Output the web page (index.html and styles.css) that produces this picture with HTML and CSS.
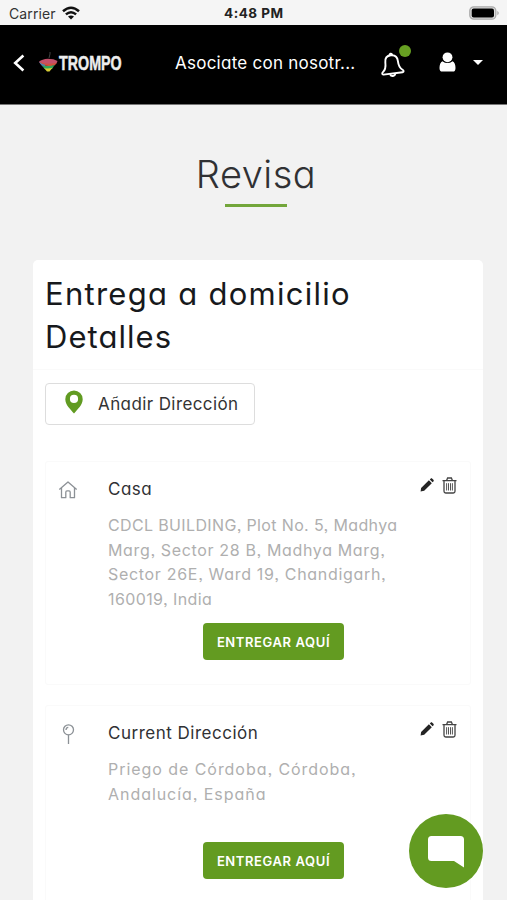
FILE: index.html
```html
<!DOCTYPE html>
<html lang="es">
<head>
<meta charset="utf-8">
<title>Revisa</title>
<link rel="stylesheet" href="styles.css">
</head>
<body>
<svg class="defs" width="0" height="0">
  <symbol id="pencil" viewBox="0 0 14 14"><path d="M.6 13.5 1.1 10 8.900 2.300l2.900 2.900-7.600 7.600zM9.800 1.500l.8-.8c.5-.5 1.200-.5 1.700 0l1.100 1.100c.5.5.5 1.200 0 1.700l-.8.8z" fill="#242424"/></symbol>
  <symbol id="trash" viewBox="0 0 15 17"><path d="M.5 3.600h14M4.600 3.400 5.600 1h3.800l1 2.400M2 4v10.300q0 1.700 1.700 1.700h7.600q1.700 0 1.700-1.700V4" fill="none" stroke="#444" stroke-width="1.300"/><path d="M4.600 6.200v7.300M6.500 6.200v7.300M8.500 6.200v7.300M10.400 6.200v7.300" fill="none" stroke="#555"/></symbol>
</svg>
<header class="status">
  <span class="carrier">Carrier</span>
  <svg class="wifi" viewBox="0 0 18 14"><g fill="none" stroke="#111" stroke-width="2.500"><path d="M1 5.300q8-7.200 16 0"/><path d="M3.900 8.400q5.100-4.400 10.200 0"/></g><path d="M6 10.600q3-2.400 6 0l-3 3z" fill="#111"/></svg>
  <span class="time">4:48 PM</span>
  <svg class="battery" viewBox="0 0 31 14"><rect x=".8" y=".8" width="26" height="12.400" rx="4" fill="#ddd" stroke="#aaa" stroke-width="1.300"/><rect x="2.700" y="2.400" width="22.300" height="9.200" rx="2" fill="#000"/><path d="M28.300 4.700q3 2.300 0 4.600z" fill="#aaa"/></svg>
</header>
<nav class="nav">
  <svg class="back" viewBox="0 0 12 18"><path d="M10.400 1.500 2.200 9l8.200 7.500" fill="none" stroke="#fff" stroke-width="2.600"/></svg>
  <svg class="logo" viewBox="0 0 19 21">
    <path d="M11 1v2l-1 4" fill="none" stroke="#444" stroke-width="1"/>
    <path d="M0 10.800Q3 8 9 7.700q6 0 9.500 2.300l-1 2.500Q9 15 1.500 13z" fill="#c4506a"/>
    <path d="M.3 10.800q7 3.400 17.400 1l-1.700 2.400Q9 16 3 14z" fill="#d0523c"/>
    <path d="M0 10.800q3 2.400 6 3L7.500 18Q3 16.500 0 10.800z" fill="#4a7fb8"/>
    <path d="M3 14.200q7 1.800 12.500-.2l-2 3.500q-4 1.600-8 .2z" fill="#32a35a"/>
    <path d="M5 17q4 1.200 8.500-.2l-3 3.600H8z" fill="#d7ce35"/>
  </svg>
  <span class="brand">TROMPO</span>
  <span class="promo">Asociate con nosotr...</span>
  <span class="alerts">
    <svg viewBox="0 0 26 26"><g transform="rotate(-7 13 13)" fill="none" stroke="#fff" stroke-width="1.900" stroke-linejoin="round"><path d="M13 3.200c-4.200 0-6.300 2.800-6.300 6.500 0 4.700-.7 7.300-3.600 9.300-1.300 1-1.100 2.500.3 2.500h19.200c1.400 0 1.600-1.500.3-2.500-2.900-2-3.600-4.600-3.600-9.300 0-3.700-2.100-6.500-6.300-6.500z"/><path d="M11.700 3.200c0-2 2.600-2 2.600 0M9.900 22c.9 2.700 4.600 2.700 5.500 0"/></g></svg>
    <i class="dot"></i>
  </span>
  <svg class="user" viewBox="0 0 17 20"><circle cx="8.500" cy="5.300" r="4.900" fill="#fff"/><path d="M3.400 9.200q5.100 3.700 10.200 0 2.900 1.700 2.900 6.700 0 3.600-2.600 3.600H3.200Q.5 19.500.5 15.900q0-5 2.900-6.700z" fill="#fff"/></svg>
  <i class="caret"></i>
</nav>
<main>
  <h1><span>Revisa</span></h1>
  <section class="panel">
    <h2><span class="h-a">Entrega a domicilio</span><br><span class="h-b">Detalles</span></h2>
    <div class="content">
      <button class="add">
        <svg viewBox="0 0 18 24"><path fill-rule="evenodd" d="M9 .5a8.700 8.700 0 0 0-8.700 8.700C.3 15 5.500 19 9 23.500 12.500 19 17.700 15 17.700 9.200A8.700 8.700 0 0 0 9 .5zm0 4.300a4.100 4.100 0 1 1 0 8.200 4.100 4.100 0 0 1 0-8.200z" fill="#619b22"/></svg>
        <span>Añadir Dirección</span>
      </button>
      <article class="address">
        <svg class="kind" viewBox="0 0 20 20"><path d="M1.300 9.500 10 2l8.700 7.500M3.500 8v9.700h4.300v-5.500q0-1.300 1.200-1.300h2q1.200 0 1.200 1.300v5.500h4.300V8" fill="none" stroke="#8c9196" stroke-width="1.300" stroke-linejoin="round"/></svg>
        <div class="body">
          <h3>Casa</h3>
          <p><span class="l1">CDCL BUILDING, Plot No. 5, Madhya</span><br><span class="l2">Marg, Sector 28 B, Madhya Marg,</span><br><span class="l3">Sector 26E, Ward 19, Chandigarh,</span><br><span class="l4">160019, India</span></p>
          <button class="deliver">ENTREGAR AQUÍ</button>
        </div>
        <div class="actions"><svg class="pencil"><use href="#pencil"/></svg><svg class="trash"><use href="#trash"/></svg></div>
      </article>
      <article class="address second">
        <svg class="kind" viewBox="0 0 20 20"><g fill="none" stroke="#8c9196" stroke-width="1.300"><circle cx="10.500" cy="5.800" r="5"/><path d="M10.500 10.800V20M8 6q0-2.300 2.300-2.600"/></g></svg>
        <div class="body">
          <h3>Current Dirección</h3>
          <p><span class="l5">Priego de Córdoba, Córdoba,</span><br><span class="l6">Andalucía, España</span></p>
          <button class="deliver">ENTREGAR AQUÍ</button>
        </div>
        <div class="actions"><svg class="pencil"><use href="#pencil"/></svg><svg class="trash"><use href="#trash"/></svg></div>
      </article>
    </div>
  </section>
</main>
<div class="chat"><svg viewBox="0 0 38 34"><path d="M4.500 1h29q3.500 0 3.500 3.500V32.500L27 26H4.500Q1 26 1 22.500v-18Q1 1 4.500 1z" fill="#fff"/></svg></div>
</body>
</html>
```
FILE: styles.css
```css
* { box-sizing: border-box; }
html, body { height: 100%; }
body {
  margin: 0;
  height: 900px;
  overflow: hidden;
  background: #f2f2f2;
  color: #303134;
  font-family: Inter, "Open Sans", sans-serif;
  font-feature-settings: "cv11", "ss03";
}
span, h3, button { white-space: nowrap; }
h1, h2, h3, p { margin: 0; font-weight: 400; }
svg { display: block; flex: none; }
.defs { position: absolute; }
.status { display: flex; height: 25px; padding: 1px 7px 0 9px; align-items: center; background: #f5f5f5; }
.carrier { width: 47px; font: 400 14px Inter, sans-serif; font-feature-settings: normal; letter-spacing: .1px; color: #333; }
.wifi { width: 18px; height: 14px; margin-left: 6px; }
.time { margin-left: 144px; width: 62px; font: 700 13.500px Inter, sans-serif; letter-spacing: .5px; color: #222; }
.battery { width: 31px; height: 14px; margin-left: auto; }
.nav { display: flex; height: 80px; align-items: center; padding: 0 24px 4px 13px; background: #000; border-bottom: 1px solid #777; color: #fff; }
.back { width: 12px; height: 18px; margin-top: 1px; }
.logo { width: 19px; height: 21px; margin: -3px 0 0 14px; }
.brand { width: 63px; margin: 1px 0 0 1px; font: 700 21px/24px "Liberation Sans", sans-serif; color: #eee; -webkit-text-stroke: .5px #eee; transform: scaleX(.68); transform-origin: left; }
.promo { width: 182px; margin: 0 0 0 53px; font-size: 17px; letter-spacing: .25px; }
.alerts { position: relative; width: 26px; height: 26px; margin: 5px 0 0 22px; }
.alerts svg { width: 26px; height: 26px; }
.dot { position: absolute; width: 12px; height: 12px; left: 20px; top: -7px; border-radius: 50%; background: #67a022; }
.user { width: 17px; height: 20px; margin: -2px 0 0 34px; }
.caret { margin-left: auto; border: 5px solid transparent; border-top-color: #fff; border-bottom: 0; }
h1 { display: flex; flex-direction: column; align-items: center; height: 155px; padding: 45px 0 0 5px; font-size: 38px; font-weight: 300; line-height: 48px; letter-spacing: .5px; }
h1::after { content: ""; width: 62px; height: 3px; margin-top: 6px; background: #73a63b; }
.panel { width: 450px; height: 680px; margin-left: 33px; border-radius: 5px 5px 0 0; background: #fff; }
h2 { height: 110px; padding: 12px 12px 0; border-bottom: 1px solid #fafafa; color: #17191c; font-size: 31px; line-height: 43px; }
.h-a { letter-spacing: 1.270px; }
.h-b { letter-spacing: 1.050px; }
.content { padding: 13px 12px; }
.add { display: flex; width: 210px; height: 42px; padding: 0 0 0 19px; align-items: center; border: 1px solid #ddd; border-radius: 4px; background: #fff; color: #333; font: 400 17px Inter, sans-serif; letter-spacing: .4px; font-feature-settings: inherit; }
.add svg { width: 18px; height: 24px; margin: -5px 15px 0 0; }
.address { display: flex; width: 426px; height: 224px; margin-top: 36px; padding: 17px 13px 0 12px; border: 1px solid #fafafa; border-radius: 3px; }
.second { margin-top: 20px; }
.kind { width: 20px; height: 20px; margin: 1px 30px 0 0; }
.body { display: flex; flex-direction: column; width: 290px; height: 182px; margin-top: -1px; }
.second .body { height: 157px; }
h3 { font-size: 17px; line-height: 22px; letter-spacing: .5px; }
p { margin-top: 13px; color: #afafaf; font-size: 16px; line-height: 24.500px; }
.l1 { letter-spacing: .36px; }
.l2 { letter-spacing: .65px; }
.l3 { letter-spacing: .69px; }
.l4 { letter-spacing: .4px; }
.l5, .l6 { letter-spacing: .95px; }
.deliver { width: 141px; height: 37px; margin: auto 0 0 95px; padding: 0; border: 0; border-radius: 4px; background: #639b21; color: #fff; font: 600 13px Inter, sans-serif; letter-spacing: .6px; }
.actions { display: flex; gap: 8px; margin: -2px 0 0 23px; }
.pencil { width: 14px; height: 14px; margin-top: 1px; }
.trash { width: 15px; height: 17px; }
.chat { position: fixed; left: 409px; top: 814px; display: flex; width: 74px; height: 74px; align-items: center; justify-content: center; border-radius: 50%; background: #639b21; }
.chat svg { width: 38px; height: 34px; margin-top: 1px; }
```
